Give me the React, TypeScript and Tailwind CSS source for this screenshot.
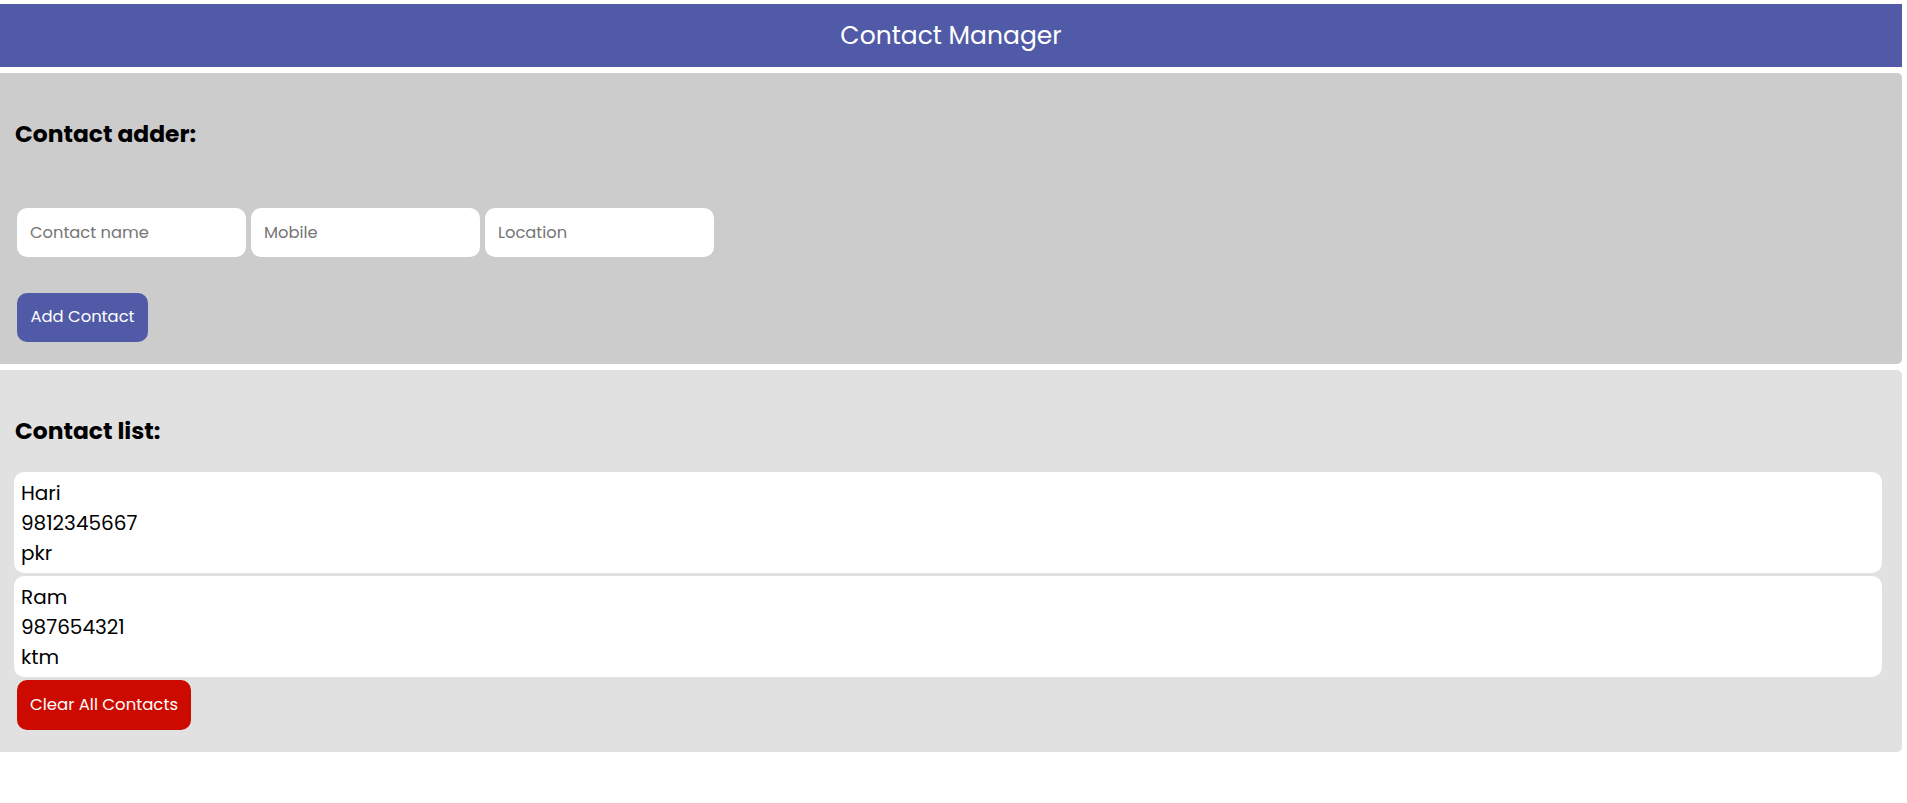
import React from "react";

const contacts = [
  { name: "Hari", mobile: "9812345667", location: "pkr" },
  { name: "Ram", mobile: "987654321", location: "ktm" },
];

export default function App() {
  return (
    <div className="min-h-[803px] bg-white pt-[4px] font-['Poppins','Inter',sans-serif] text-black">
      <header className="mr-[5px] flex h-[63px] items-center justify-center bg-[#515aa6]">
        <h1 className="text-[25px] font-normal leading-none text-white">Contact Manager</h1>
      </header>

      <section className="mr-[5px] mt-[6px] rounded-r-[5px] bg-[#cccccc] pb-[22px] pl-[15px] pt-[46px]">
        <h2 className="text-[23.4px] font-bold leading-[30px]">Contact adder:</h2>
        <div className="mt-[59px] flex gap-[5px] pl-[2px]">
          <input
            className="h-[49px] w-[229px] rounded-[10px] bg-white px-[13px] text-[16.3px] text-black outline-none placeholder:text-[#757575]"
            placeholder="Contact name"
          />
          <input
            className="h-[49px] w-[229px] rounded-[10px] bg-white px-[13px] text-[16.3px] text-black outline-none placeholder:text-[#757575]"
            placeholder="Mobile"
          />
          <input
            className="h-[49px] w-[229px] rounded-[10px] bg-white px-[13px] text-[16.3px] text-black outline-none placeholder:text-[#757575]"
            placeholder="Location"
          />
        </div>
        <button className="ml-[2px] mt-[36px] h-[49px] w-[131px] rounded-[10px] bg-[#515aa6] text-center text-[16.4px] text-white">
          Add Contact
        </button>
      </section>

      <section className="mr-[5px] mt-[6px] rounded-r-[5px] bg-[#e1e1e1] pb-[22px] pt-[46px]">
        <h2 className="pl-[15px] text-[23.4px] font-bold leading-[30px]">Contact list:</h2>
        <div className="mt-[26px] flex flex-col gap-[3px] pl-[14px] pr-[20px]">
          {contacts.map((c) => (
            <div key={c.name} className="rounded-[10px] bg-white pb-[5px] pl-[7px] pt-[6px] text-[20px] leading-[30px]">
              <div>{c.name}</div>
              <div>{c.mobile}</div>
              <div>{c.location}</div>
            </div>
          ))}
        </div>
        <button className="ml-[17px] mt-[3px] h-[50px] w-[174px] rounded-[10px] bg-[#cc0a00] text-center text-[16.5px] text-white">
          Clear All Contacts
        </button>
      </section>
    </div>
  );
}
